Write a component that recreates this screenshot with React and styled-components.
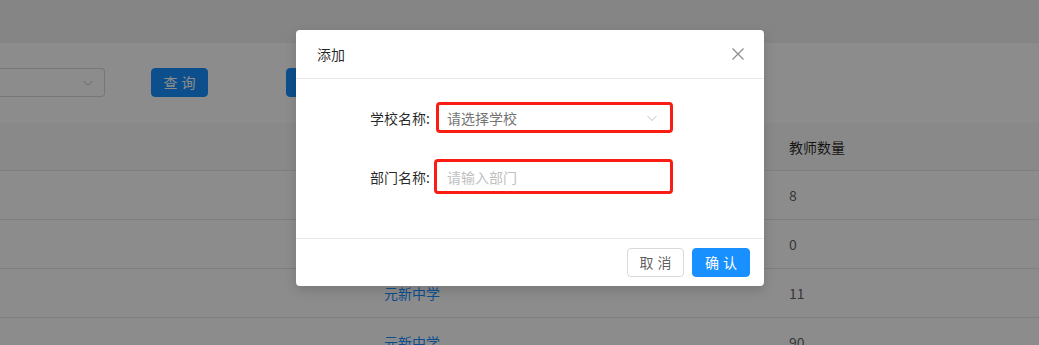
import styled, { createGlobalStyle } from 'styled-components'

const GlobalStyle = createGlobalStyle`
  html, body {
    margin: 0;
    padding: 0;
  }
  body {
    font-family: "Noto Sans CJK SC", "Noto Sans", sans-serif;
    font-size: 14px;
    color: rgba(0, 0, 0, 0.65);
    background: #fff;
  }
`

const Page = styled.div`
  position: relative;
  width: 1039px;
  height: 345px;
  overflow: hidden;
  background: #fff;
`

const TopBand = styled.div`
  height: 43px;
  background: #f2f2f2;
`

const Toolbar = styled.div`
  display: flex;
  align-items: center;
  padding-top: 25px;
  height: 29px;
  margin-bottom: 26px;
`

const FakeSelect = styled.div`
  width: 105px;
  height: 29px;
  box-sizing: border-box;
  border: 1px solid #d9d9d9;
  border-left: none;
  border-radius: 0 4px 4px 0;
  display: flex;
  align-items: center;
  justify-content: flex-end;
  padding-right: 10px;
  color: #bfbfbf;
`

const Button = styled.button`
  height: 29px;
  box-sizing: border-box;
  padding: 0;
  width: ${(p) => p.$w || 57}px;
  margin-left: ${(p) => p.$ml || 0}px;
  border-radius: 4px;
  font-family: inherit;
  font-size: 14px;
  letter-spacing: 4px;
  text-indent: 4px;
  line-height: 27px;
  cursor: pointer;
  border: 1px solid ${(p) => (p.$primary ? '#1890ff' : '#d9d9d9')};
  background: ${(p) => (p.$primary ? '#1890ff' : '#fff')};
  color: ${(p) => (p.$primary ? '#fff' : 'rgba(0, 0, 0, 0.65)')};
`

const Table = styled.div`
  display: grid;
  grid-template-columns: 368px 405px 1fr;
`

const HeadCell = styled.div`
  height: 47px;
  background: #fafafa;
  border-bottom: 1px solid #e8e8e8;
  display: flex;
  align-items: center;
  padding-left: 16px;
  color: rgba(0, 0, 0, 0.85);
  line-height: 20px;
`

const Cell = styled.div`
  height: 48px;
  border-bottom: 1px solid #e8e8e8;
  display: flex;
  align-items: center;
  padding-left: 16px;
  line-height: 20px;
  color: ${(p) => (p.$link ? '#1890ff' : 'rgba(0, 0, 0, 0.65)')};
`

const Mask = styled.div`
  position: absolute;
  inset: 0;
  background: rgba(0, 0, 0, 0.45);
`

const Modal = styled.div`
  position: absolute;
  left: 296px;
  top: 30px;
  width: 468px;
  background: #fff;
  border-radius: 4px;
  box-shadow: 0 4px 12px rgba(0, 0, 0, 0.15);
`

const ModalHeader = styled.div`
  height: 48px;
  border-bottom: 1px solid #e8e8e8;
  display: flex;
  align-items: center;
  justify-content: space-between;
  padding: 0 19px 0 21px;
`

const Title = styled.div`
  font-size: 14px;
  line-height: 22px;
  color: rgba(0, 0, 0, 0.85);
`

const Close = styled.span`
  display: flex;
  width: 14px;
  height: 14px;
  cursor: pointer;
`

const ModalBody = styled.div`
  padding: 23px 0 44px;
  border-bottom: 1px solid #e8e8e8;
  display: flex;
  flex-direction: column;
  gap: 26px;
`

const FormRow = styled.div`
  display: flex;
  align-items: center;
`

const Label = styled.label`
  width: 134px;
  text-align: right;
  padding-right: ${(p) => p.$gap}px;
  color: rgba(0, 0, 0, 0.85);
  line-height: 20px;
`

const Field = styled.div`
  width: ${(p) => p.$w}px;
  height: ${(p) => p.$h}px;
  box-sizing: border-box;
  border: 3px solid #fb1c13;
  border-radius: 4px;
  display: flex;
  align-items: center;
  justify-content: space-between;
  padding: 0 12px 0 ${(p) => p.$pl}px;
  line-height: 20px;
  color: ${(p) => (p.$muted ? '#bfbfbf' : '#757575')};
`

const ModalFooter = styled.div`
  height: 47px;
  display: flex;
  align-items: center;
  justify-content: flex-end;
  gap: 8px;
  padding-right: 14px;
`

const Chevron = ({ size = 12, color = '#bfbfbf' }) => (
  <svg width={size} height={size} viewBox="0 0 12 12" fill="none">
    <path d="M1.5 4 L6 8.5 L10.5 4" stroke={color} strokeWidth="1" />
  </svg>
)

const rows = [
  { school: '元新中学', count: 8 },
  { school: '元新中学', count: 0 },
  { school: '元新中学', count: 11 },
  { school: '元新中学', count: 90 },
]

export default function App() {
  return (
    <>
      <GlobalStyle />
      <Page>
        <TopBand />
        <Toolbar>
          <FakeSelect>
            <Chevron />
          </FakeSelect>
          <Button $primary $ml={46}>查询</Button>
          <Button $primary $ml={78} $w={80}>添加</Button>
        </Toolbar>
        <Table>
          <HeadCell />
          <HeadCell>学校名称</HeadCell>
          <HeadCell>教师数量</HeadCell>
          {rows.map((r, i) => (
            <Row key={i} row={r} />
          ))}
        </Table>

        <Mask />
        <Modal>
          <ModalHeader>
            <Title>添加</Title>
            <Close>
              <svg width="14" height="14" viewBox="0 0 14 14" fill="none">
                <path d="M1.5 1.5 L12.5 12.5 M12.5 1.5 L1.5 12.5" stroke="#8c8c8c" strokeWidth="1.2" />
              </svg>
            </Close>
          </ModalHeader>
          <ModalBody>
            <FormRow>
              <Label $gap={6}>学校名称:</Label>
              <Field $w={237} $h={31} $pl={8}>
                <span>请选择学校</span>
                <Chevron />
              </Field>
            </FormRow>
            <FormRow>
              <Label $gap={4}>部门名称:</Label>
              <Field $w={239} $h={35} $pl={10} $muted>
                <span>请输入部门</span>
              </Field>
            </FormRow>
          </ModalBody>
          <ModalFooter>
            <Button>取消</Button>
            <Button $primary $w={58}>确认</Button>
          </ModalFooter>
        </Modal>
      </Page>
    </>
  )
}

function Row({ row }) {
  return (
    <>
      <Cell />
      <Cell $link>{row.school}</Cell>
      <Cell>{row.count}</Cell>
    </>
  )
}
